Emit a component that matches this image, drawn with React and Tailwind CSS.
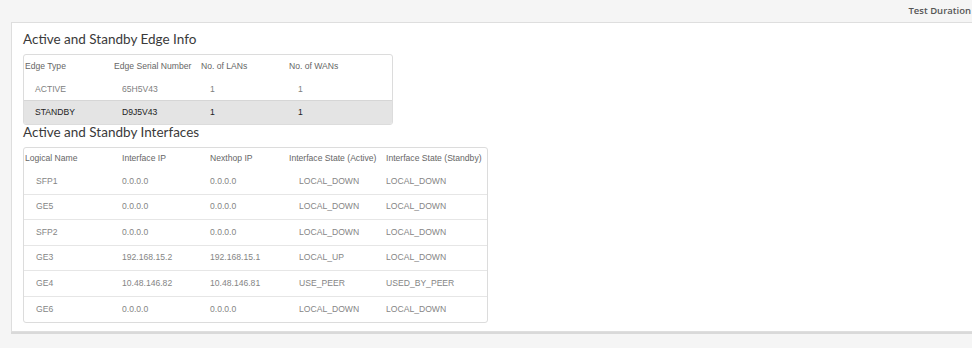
const edgeRows = [
  { type: "ACTIVE", serial: "65H5V43", lans: "1", wans: "1", selected: false },
  { type: "STANDBY", serial: "D9J5V43", lans: "1", wans: "1", selected: true },
];

const interfaceRows = [
  ["SFP1", "0.0.0.0", "0.0.0.0", "LOCAL_DOWN", "LOCAL_DOWN"],
  ["GE5", "0.0.0.0", "0.0.0.0", "LOCAL_DOWN", "LOCAL_DOWN"],
  ["SFP2", "0.0.0.0", "0.0.0.0", "LOCAL_DOWN", "LOCAL_DOWN"],
  ["GE3", "192.168.15.2", "192.168.15.1", "LOCAL_UP", "LOCAL_DOWN"],
  ["GE4", "10.48.146.82", "10.48.146.81", "USE_PEER", "USED_BY_PEER"],
  ["GE6", "0.0.0.0", "0.0.0.0", "LOCAL_DOWN", "LOCAL_DOWN"],
];

const tableFont = { fontFamily: '"Liberation Sans", Arial, sans-serif' };

function SectionTitle({ children }) {
  return (
    <h2 className="font-['Lato',sans-serif] text-[13.5px] leading-[14px] font-normal text-[#3a3a3a]">
      {children}
    </h2>
  );
}

function EdgeTable() {
  const cols = "grid grid-cols-[89px_87px_88px_1fr] items-center";
  return (
    <div
      className="mt-[8px] w-[370px] overflow-hidden rounded-[3px] border border-[#dcdcdc] bg-white text-[8.6px]"
      style={tableFont}
    >
      <div className={`${cols} h-[23px] pl-[1px] text-[#666]`}>
        <span>Edge Type</span>
        <span>Edge Serial Number</span>
        <span>No. of LANs</span>
        <span>No. of WANs</span>
      </div>
      {edgeRows.map((row) => (
        <div
          key={row.type}
          className={
            row.selected
              ? `${cols} h-[24px] border-t border-[#d6d6d6] bg-[#e4e4e4] text-[#222]`
              : `${cols} h-[22px] text-[#808080]`
          }
        >
          <span className="pl-[11px]">{row.type}</span>
          <span className="pl-[9px]">{row.serial}</span>
          <span className="pl-[10px]">{row.lans}</span>
          <span className="pl-[10px]">{row.wans}</span>
        </div>
      ))}
    </div>
  );
}

function InterfaceTable() {
  const cols = "grid grid-cols-[97px_88px_79px_97px_1fr] items-center";
  return (
    <div
      className="mt-[8px] w-[465px] overflow-hidden rounded-[3px] border border-[#dcdcdc] bg-white text-[8.6px]"
      style={tableFont}
    >
      <div className={`${cols} h-[21px] pl-[1px] text-[#666]`}>
        <span>Logical Name</span>
        <span>Interface IP</span>
        <span>Nexthop IP</span>
        <span>Interface State (Active)</span>
        <span>Interface State (Standby)</span>
      </div>
      {interfaceRows.map((row, i) => (
        <div
          key={row[0]}
          className={`${cols} h-[25.5px] pl-[1px] text-[#858585] ${
            i < interfaceRows.length - 1 ? "border-b border-[#e6e6e6]" : ""
          }`}
        >
          <span className="pl-[11px]">{row[0]}</span>
          <span>{row[1]}</span>
          <span>{row[2]}</span>
          <span className="pl-[10px]">{row[3]}</span>
          <span>{row[4]}</span>
        </div>
      ))}
    </div>
  );
}

export default function App() {
  return (
    <div className="h-[348px] w-[972px] overflow-hidden bg-[#f5f5f5]">
      <div className="flex h-[22px] items-center justify-end">
        <span className="mr-[1px] font-['Open_Sans',sans-serif] text-[9.5px] font-semibold text-[#555]">
          Test Duration
        </span>
      </div>
      <div className="ml-[11px] h-[310px] w-[975px] border border-[#dedede] bg-white pl-[11px] pt-[9px] shadow-[0_2px_0_#d9d9d9]">
        <SectionTitle>Active and Standby Edge Info</SectionTitle>
        <EdgeTable />
        <SectionTitle>Active and Standby Interfaces</SectionTitle>
        <InterfaceTable />
      </div>
    </div>
  );
}
